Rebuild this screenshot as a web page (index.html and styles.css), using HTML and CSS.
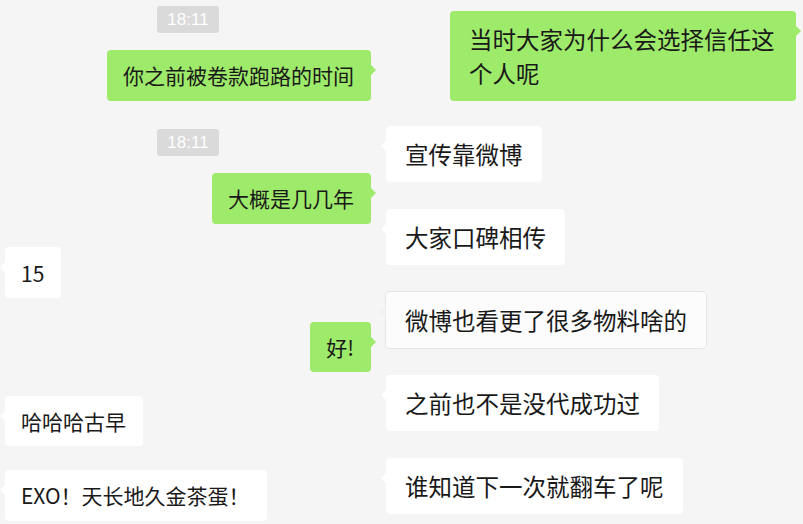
FILE: index.html
```html
<!DOCTYPE html>
<html lang="zh-CN">

<head>
    <meta charset="UTF-8">
    <meta name="viewport" content="width=device-width, initial-scale=1.0">
    <title>聊天记录</title>
    <link rel="stylesheet" href="styles.css">
</head>

<body>
    <div class="chats">
        <!-- left screenshot -->
        <div class="chat chat-left">
            <div class="time first">18:11</div>
            <div class="msg me">你之前被卷款跑路的时间</div>
            <div class="time">18:11</div>
            <div class="msg me">大概是几几年</div>
            <div class="msg other">15</div>
            <div class="msg me">好!</div>
            <div class="msg other">哈哈哈古早</div>
            <div class="msg other">EXO！天长地久金茶蛋！</div>
        </div>

        <!-- right screenshot -->
        <div class="chat chat-right">
            <div class="msg me">当时大家为什么会选择信任这个人呢</div>
            <div class="msg other">宣传靠微博</div>
            <div class="msg other">大家口碑相传</div>
            <div class="msg other outlined">微博也看更了很多物料啥的</div>
            <div class="msg other">之前也不是没代成功过</div>
            <div class="msg other">谁知道下一次就翻车了呢</div>
        </div>
    </div>
</body>

</html>
```

FILE: styles.css
```css
/* page */
body {
    margin: 0;
    background-color: #f5f5f5;
    font-family: "Noto Sans CJK SC", "Liberation Sans", sans-serif;
    color: #191919;
    overflow: hidden;
}

.chats {
    display: flex;
    height: 524px;
}

/* one chat column */
.chat {
    display: flex;
    flex-direction: column;
}

.chat-left {
    width: 376px;
    padding: 0 5px;
    box-sizing: border-box;
    font-size: 21px;
}

.chat-right {
    flex: 1;
    padding: 11px 7px 0 10px;
    font-size: 23.5px;
}

/* time stamp */
.time {
    align-self: center;
    width: 62px;
    height: 27px;
    line-height: 27px;
    margin: 5px 0 17px;
    background-color: #dadada;
    color: #fff;
    border-radius: 3px;
    text-align: center;
    font-family: "Liberation Sans", sans-serif;
    font-size: 17px;
}

.time.first {
    margin-top: 6px;
}

/* bubbles */
.msg {
    position: relative;
    border-radius: 4px;
    line-height: 30px;
    padding: 10px 17px 10px 16px;
    margin-bottom: 23.6px;
}

.chat-left .msg {
    padding-top: 10.3px;
    padding-bottom: 10.3px;
}

.chat-right .msg {
    line-height: 34px;
    padding: 11px 19px;
    margin-bottom: 27px;
    max-width: 346px;
    box-sizing: border-box;
}

.chat-right .msg.me {
    margin-bottom: 25px;
}

.msg.me {
    align-self: flex-end;
    background-color: #9eea6a;
}

.msg.other {
    align-self: flex-start;
    background-color: #fff;
}

.msg.outlined {
    background-color: #fcfcfc;
    box-shadow: 0 0 0 1px #e6e6e6;
}

/* little tails */
.msg::after {
    content: "";
    position: absolute;
    top: 15px;
    border: 5px solid transparent;
}

.msg.me::after {
    right: -10px;
    border-left-color: #9eea6a;
}

.msg.other::after {
    left: -10px;
    border-right-color: #fff;
}

.msg.outlined::after {
    border-right-color: #f0f0f0;
}
```
